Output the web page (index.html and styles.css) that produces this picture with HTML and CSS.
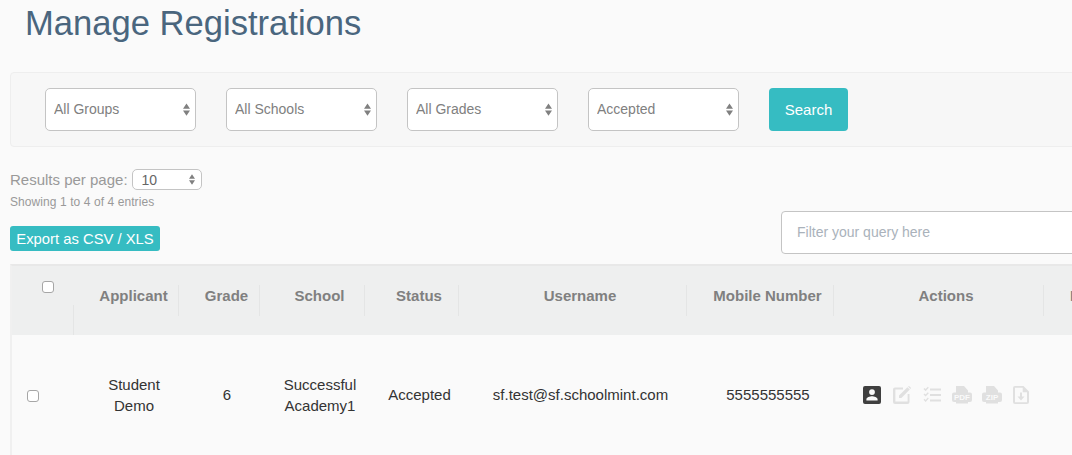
FILE: index.html
```html
<!DOCTYPE html>
<html lang="en">
<head>
<meta charset="utf-8">
<title>Manage Registrations</title>
<link rel="stylesheet" href="styles.css">
</head>
<body>
<main class="page">
  <h1 class="title">Manage Registrations</h1>
  <form class="panel">
    <div class="select-wrap"><select class="select"><option>All Groups</option></select><svg class="updown" viewBox="0 0 8 14"><path d="M4 0 8 6H0ZM0 8H8L4 14Z"/></svg></div>
    <div class="select-wrap"><select class="select"><option>All Schools</option></select><svg class="updown" viewBox="0 0 8 14"><path d="M4 0 8 6H0ZM0 8H8L4 14Z"/></svg></div>
    <div class="select-wrap"><select class="select"><option>All Grades</option></select><svg class="updown" viewBox="0 0 8 14"><path d="M4 0 8 6H0ZM0 8H8L4 14Z"/></svg></div>
    <div class="select-wrap"><select class="select"><option>Accepted</option></select><svg class="updown" viewBox="0 0 8 14"><path d="M4 0 8 6H0ZM0 8H8L4 14Z"/></svg></div>
    <button class="search" type="button">Search</button>
  </form>

  <div class="toolbar">
    <div class="toolbar-left">
      <div class="perpage">
        <span>Results per page:</span>
        <div class="select-wrap small"><select class="select select-small"><option>10</option></select><svg class="updown" viewBox="0 0 8 14"><path d="M4 0 8 6H0ZM0 8H8L4 14Z"/></svg></div>
      </div>
      <div class="showing">Showing 1 to 4 of 4 entries</div>
      <button class="export" type="button">Export as CSV / XLS</button>
    </div>
    <input class="filter" type="text" placeholder="Filter your query here">
  </div>

  <table class="grid">
    <colgroup>
      <col class="c-check"><col class="c-app"><col class="c-grade"><col class="c-school"><col class="c-status"><col class="c-user"><col class="c-mobile"><col class="c-actions"><col class="c-more">
    </colgroup>
    <thead>
      <tr>
        <th class="th-check"><input class="check check-head" type="checkbox"><div class="check-sep"></div></th>
        <th><div class="th-label">Applicant</div></th>
        <th><div class="th-label">Grade</div></th>
        <th><div class="th-label">School</div></th>
        <th><div class="th-label">Status</div></th>
        <th><div class="th-label">Username</div></th>
        <th><div class="th-label">Mobile Number</div></th>
        <th><div class="th-label">Actions</div></th>
        <th><div class="th-label th-last">D</div></th>
      </tr>
    </thead>
    <tbody>
      <tr>
        <td class="td-check"><input class="check" type="checkbox"></td>
        <td>Student<br>Demo</td>
        <td>6</td>
        <td>Successful<br>Academy1</td>
        <td>Accepted</td>
        <td>sf.test@sf.schoolmint.com</td>
        <td>5555555555</td>
        <td>
          <div class="actions">
            <svg class="icon icon-on" viewBox="0 0 18 18"><path d="M2 0H16A2 2 0 0 1 18 2V16A2 2 0 0 1 16 18H2A2 2 0 0 1 0 16V2A2 2 0 0 1 2 0ZM9 3.200A2.900 2.900 0 1 0 9 9 2.900 2.900 0 1 0 9 3.200ZM3.400 14.600H14.600V13.400C14.600 11.300 11 10.300 9 10.300S3.400 11.300 3.400 13.400Z" fill-rule="evenodd"/></svg>
            <svg class="icon" viewBox="0 0 18 18"><path d="M2 1.500H10V3.400H2.400V15.600H14.600V8H16.500V16A2 2 0 0 1 14.500 18H2A2 2 0 0 1 0 16V3.500A2 2 0 0 1 2 1.500Z"/><path d="M6 9.600 14.400 1.200 16.800 3.600 8.400 12H6Z"/><path d="M15.200.4A1 1 0 0 1 16.600.4L17.600 1.400A1 1 0 0 1 17.600 2.800L17.400 3 15 .6Z"/></svg>
            <svg class="icon" viewBox="0 0 18 18"><path d="M7 2.600H18V4.600H7ZM7 8H18V10H7ZM7 13.400H18V15.400H7Z"/><path d="M.5 3 1.600 2 2.600 3.100 4.800.8 5.800 1.800 2.600 5.200ZM.5 8.400 1.600 7.400 2.600 8.500 4.800 6.200 5.800 7.200 2.600 10.600ZM.5 13.800 1.600 12.800 2.600 13.900 4.800 11.600 5.800 12.600 2.600 16Z"/></svg>
            <svg class="icon icon-wide" viewBox="0 0 20 18"><path d="M4 0H12L16 4.500V6.500H18A2 2 0 0 1 20 8.500V14A2 2 0 0 1 18 16H16V17.500H4V16H2A2 2 0 0 1 0 14V8.500A2 2 0 0 1 2 6.500H4Z"/><text class="icon-text" x="10" y="14.300" text-anchor="middle">PDF</text></svg>
            <svg class="icon icon-wide" viewBox="0 0 20 18"><path d="M4 0H12L16 4.500V6.500H18A2 2 0 0 1 20 8.500V14A2 2 0 0 1 18 16H16V17.500H4V16H2A2 2 0 0 1 0 14V8.500A2 2 0 0 1 2 6.500H4Z"/><text class="icon-text" x="10" y="14.300" text-anchor="middle">ZIP</text></svg>
            <svg class="icon icon-file" viewBox="0 0 16 18"><path fill-rule="evenodd" d="M2 0H10.500L16 5.500V16A2 2 0 0 1 14 18H2A2 2 0 0 1 0 16V2A2 2 0 0 1 2 0ZM2 1.800V16.200H14V6.300H9.700V1.800Z"/><path d="M7 6.500H9V10.500H11.500L8 14.500 4.500 10.500H7Z"/></svg>
          </div>
        </td>
        <td></td>
      </tr>
    </tbody>
  </table>
</main>
</body>
</html>
```
FILE: styles.css
```css
* { box-sizing: border-box; }
html, body {
  margin: 0;
  height: 100%;
  overflow: hidden;
  background: #fafafa;
}
body {
  font-family: "Liberation Sans", Arial, sans-serif;
  font-size: 15px;
  color: #333;
}
.page {
  width: 1400px;
  padding-left: 10px;
}
.title {
  margin: 0;
  padding: 3px 0 0 15px;
  height: 72px;
  font-size: 34.600px;
  line-height: 40px;
  font-weight: 400;
  color: #4a667e;
}
.panel {
  display: flex;
  align-items: stretch;
  gap: 30px;
  height: 75px;
  padding: 15px 34px;
  background: #f7f7f7;
  border: 1px solid #eeeeee;
  border-radius: 4px;
}
.select-wrap {
  position: relative;
  width: 151px;
  height: 43px;
}
.select {
  display: block;
  width: 100%;
  height: 100%;
  padding: 0 8px 2px;
  appearance: none;
  -webkit-appearance: none;
  background: #fff;
  border: 1px solid #c4c4c4;
  border-radius: 5px;
  font: 14px "Liberation Sans", Arial, sans-serif;
  color: #808080;
}
.updown {
  position: absolute;
  top: 15px;
  right: 6px;
  width: 7px;
  height: 13px;
  fill: #808080;
}
.search {
  width: 79px;
  height: 43px;
  padding: 0;
  border: 0;
  border-radius: 4px;
  background: #36bcc2;
  color: #fff;
  font: 15px "Liberation Sans", Arial, sans-serif;
}
.toolbar {
  display: flex;
  justify-content: space-between;
  align-items: flex-start;
  height: 117px;
}
.toolbar-left {
  display: flex;
  flex-direction: column;
  align-items: flex-start;
  width: 771px;
  padding-top: 22px;
}
.perpage {
  display: flex;
  align-items: center;
  gap: 4px;
  height: 21px;
  color: #999;
}
.small {
  width: 70px;
  height: 21px;
}
.small .updown {
  top: 5px;
  right: 7px;
  width: 6px;
  height: 11px;
}
.select-small {
  padding: 0 0 0 9px;
  font-size: 14px;
  color: #666;
}
.showing {
  margin-top: 3px;
  font-size: 12px;
  letter-spacing: 0.08px;
  line-height: 18px;
  color: #999;
}
.export {
  margin-top: 15px;
  width: 150px;
  height: 25px;
  padding: 0;
  border: 0;
  border-radius: 3px;
  background: #36bcc2;
  color: #fff;
  font: 14.800px "Liberation Sans", Arial, sans-serif;
}
.filter {
  flex: 1;
  height: 43px;
  margin-top: 64px;
  padding: 0 15px 2px;
  background: #fff;
  border: 1px solid #c4c4c4;
  border-radius: 4px;
  font: 14px "Liberation Sans", Arial, sans-serif;
}
.filter::placeholder {
  color: #aab2bb;
  opacity: 1;
}
.grid {
  table-layout: fixed;
  width: 1132px;
  border-collapse: separate;
  border-spacing: 0;
  border-top: 2px solid #e8e8e8;
  border-left: 2px solid #f0f0f0;
}
.c-check { width: 62px; }
.c-app { width: 105px; }
.c-grade { width: 81px; }
.c-school { width: 105px; }
.c-status { width: 94px; }
.c-user { width: 228px; }
.c-mobile { width: 147px; }
.c-actions { width: 210px; }
.c-more { width: 100px; }
th {
  height: 69px;
  padding: 19px 0 0;
  vertical-align: top;
  background: #eeefef;
  color: #808080;
  font-weight: 700;
  font-size: 15px;
}
.th-label {
  height: 31px;
  padding-left: 15px;
  line-height: 22px;
  text-align: center;
  border-right: 1px solid #e4e5e5;
}
.th-last {
  padding-left: 26px;
  text-align: left;
  border-right: 0;
}
.th-check {
  padding: 0;
}
.check {
  appearance: none;
  -webkit-appearance: none;
  display: block;
  width: 12px;
  height: 12px;
  margin: 0;
  background: #fff;
  border: 1px solid #a6a6a6;
  border-radius: 3px;
}
.check-head {
  margin: 15px 0 0 30px;
}
.check-sep {
  height: 30px;
  margin-top: 12px;
  border-right: 1px solid #e4e5e5;
}
td {
  height: 120px;
  padding: 0 0 1px 15px;
  text-align: center;
  vertical-align: middle;
  line-height: 21px;
  color: #333;
}
.td-check {
  padding-top: 2px;
}
.actions {
  display: flex;
  align-items: center;
  justify-content: center;
  gap: 12px;
  height: 18px;
  padding-right: 2px;
}
.icon {
  flex: none;
  width: 18px;
  height: 18px;
  fill: #e0e0e0;
}
.icon-on {
  fill: #3f3f3f;
}
.icon-wide {
  width: 20px;
  margin: 0 -1px;
}
.icon-file {
  width: 16px;
}
.icon-text {
  font: 700 8px "Liberation Sans", Arial, sans-serif;
  fill: #fafafa;
}
```
